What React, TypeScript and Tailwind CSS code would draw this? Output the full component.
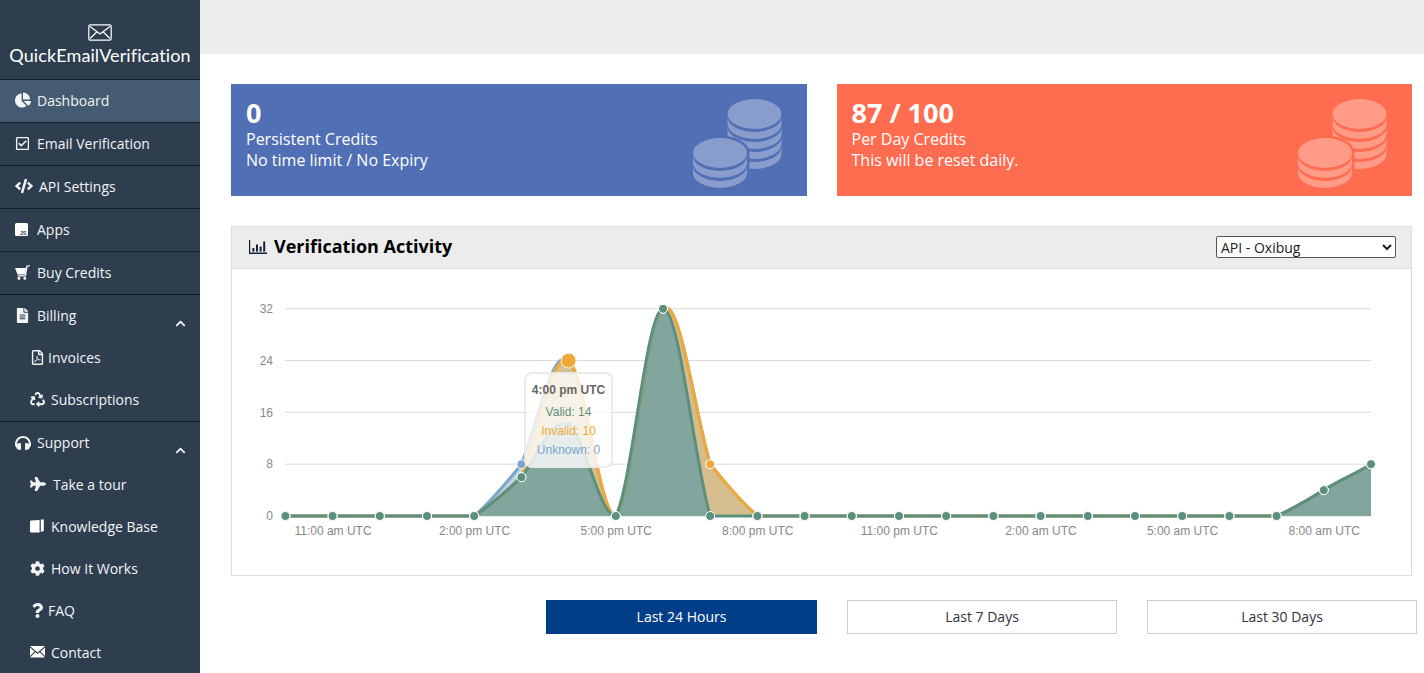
import React from "react";
import { FaChartPie, FaRegCheckSquare, FaCode, FaFileAlt, FaRegFilePdf, FaRecycle, FaHeadphones, FaPlane, FaCog, FaQuestion, FaChevronUp } from "react-icons/fa";

const X0 = 285.4;
const STEP = (1371 - 285.4) / 23;
const Y = (v: number) => 516 - v * 6.475;
const xs = Array.from({ length: 24 }, (_, i) => X0 + STEP * i);
const series = (m: Record<number, number>) => xs.map((_, i) => m[i] ?? 0);
const green = series({ 5: 6, 6: 14, 8: 32, 22: 4, 23: 8 });
const orange = series({ 5: 6, 6: 24, 8: 32, 9: 8, 22: 4, 23: 8 });
const blue = series({ 5: 8, 6: 24, 8: 32, 9: 8, 22: 4, 23: 8 });

function linePath(vals: number[]) {
  const ys = vals.map(Y);
  const grads = ys.map((y, i) => {
    if (i === 0) return (ys[1] - y) / STEP;
    if (i === ys.length - 1) return (y - ys[i - 1]) / STEP;
    return (ys[i + 1] - ys[i - 1]) / (2 * STEP);
  });
  const max = Y(0);
  let d = `M${xs[0]},${ys[0]}`;
  for (let i = 1; i < ys.length; i++) {
    const ix = STEP * 0.35;
    const iy = STEP * 0.55;
    const limit = Math.abs(ys[i] - ys[i - 1]) * 0.4;
    const clamp = (h: number) => Math.max(-limit, Math.min(limit, h));
    d += `C${xs[i - 1] + ix},${Math.min(max, ys[i - 1] + clamp(iy * grads[i - 1]))} ${xs[i] - ix},${Math.min(max, ys[i] - clamp(iy * grads[i]))} ${xs[i]},${ys[i]}`;
  }
  return d;
}

const C = { green: "#5b8f7e", orange: "#f0a838", blue: "#7ba6cb" };

function Series({ vals, line, fill, op }: { vals: number[]; line: string; fill: string; op: number }) {
  const d = linePath(vals);
  return (
    <>
      <path d={`${d}L1371,516L285.4,516Z`} fill={fill} fillOpacity={op} />
      <path d={d} fill="none" stroke={line} strokeWidth={3} />
    </>
  );
}

function Dots({ vals, color, big }: { vals: number[]; color: string; big?: number }) {
  return (
    <>
      {vals.map((v, i) => (
        <circle key={i} cx={xs[i]} cy={Y(v)} r={i === big ? 7.5 : 4.5} fill={color} stroke="#fff" strokeWidth={1} />
      ))}
    </>
  );
}

function Chart() {
  const grid: [number, number][] = [[0, 4], [8, 4], [16, 4.5], [24, 4.5], [32, 4.5]];
  const labels: [number, string][] = [
    [1, "11:00 am UTC"], [4, "2:00 pm UTC"], [7, "5:00 pm UTC"], [10, "8:00 pm UTC"],
    [13, "11:00 pm UTC"], [16, "2:00 am UTC"], [19, "5:00 am UTC"], [22, "8:00 am UTC"],
  ];
  return (
    <svg viewBox="232 269 1179 305" className="block w-[1179px] h-[305px]" fontFamily="'Liberation Sans', Arial, sans-serif" fontSize={12}>
      {grid.map(([g, o]) => (
        <g key={g}>
          <line x1={285} x2={1371} y1={Y(g)} y2={Y(g)} stroke="#d9d9d9" strokeWidth={1} />
          <text x={273} y={Y(g) + o} textAnchor="end" fill="#888">{g}</text>
        </g>
      ))}
      {labels.map(([i, t]) => (
        <text key={t} x={xs[i] + 0.4} y={535} textAnchor="middle" fill="#888">{t}</text>
      ))}
      <Series vals={blue} line={C.blue} fill="#7ba6cb" op={0.5} />
      <Series vals={orange} line={C.orange} fill="#f0a838" op={0.5} />
      <Series vals={green} line={C.green} fill="#669ea2" op={0.75} />
      <Dots vals={blue} color={C.blue} />
      <Dots vals={orange} color={C.orange} big={6} />
      <Dots vals={green} color={C.green} />
    </svg>
  );
}

function Coins({ bg }: { bg: string }) {
  const stack = (cx: number, cy: number, n: number) => (
    <>
      {Array.from({ length: n }, (_, i) => {
        const a = cy + 3 + i * 10;
        return <path key={i} d={`M${cx - 27} ${a}A27 15 0 0 0 ${cx + 27} ${a}V${a + 7}A27 15 0 0 1 ${cx - 27} ${a + 7}Z`} fill="#fff" fillOpacity={0.32} />;
      })}
      <ellipse cx={cx} cy={cy} rx={27} ry={15} fill="#fff" fillOpacity={0.32} />
    </>
  );
  return (
    <svg width={92} height={92} viewBox="690 97 92 92" className="shrink-0">
      {stack(754.5, 113, 4)}
      <path d="M693 152A27 15 0 0 1 747 152V172A27 15 0 0 1 693 172Z" fill={bg} stroke={bg} strokeWidth={5} />
      {stack(720, 152, 2)}
    </svg>
  );
}

const LogoMail = () => (
  <svg width={24} height={17} viewBox="0 0 24 17" fill="none" stroke="#fff" strokeWidth={1.2}>
    <rect x={0.8} y={0.8} width={22.4} height={15.4} rx={1.5} />
    <path d="M2 2.5L12 10L22 2.5M2 14.5L9 7.8M22 14.5L15 7.8" />
  </svg>
);

const JsIcon = () => (
  <svg width={13} height={13} viewBox="0 0 13 13">
    <rect width={13} height={13} rx={1.5} fill="#fff" />
    <text x={11.5} y={11.5} textAnchor="end" fontSize={5.5} fontWeight={700} fill="#2e3e4e" fontFamily="'Liberation Sans', sans-serif">JS</text>
  </svg>
);

const MailIcon = () => (
  <svg width={15} height={12} viewBox="0 0 15 12">
    <path d="M0 0H15L7.5 6.5Z M0 1.6L4.6 5.4L0 10Z M15 1.6L10.4 5.4L15 10Z M0 11.6L5.4 6.2L7.5 8L9.6 6.2L15 11.6Z" fill="#fff" />
  </svg>
);

const CartIcon = () => (
  <svg width={15} height={15} viewBox="0 0 15 15" fill="#fff">
    <path d="M0 3H11L10.2 9.4H2.6Z" />
    <path d="M10.9 2.6L11.4 0.7L14.8 0V1.3L12.5 1.8L11 11.4H2.6V10.3H10Z" />
    <circle cx={4} cy={13.4} r={1.4} />
    <circle cx={9.8} cy={13.4} r={1.4} />
  </svg>
);

const BookIcon = () => (
  <svg width={14} height={14} viewBox="0 0 14 14" fill="#fff">
    <path d="M0 2.6Q0 1.8 1 1.6L9.6 0.9V13.4H1.2Q0 13.4 0 12.4Z" />
    <path d="M10.8 0.4H13.8V12L10.8 13Z" />
  </svg>
);

const BarIcon = () => (
  <svg width={18} height={14} viewBox="0 0 18 14" fill="#14213a">
    <path d="M0 0H1.2V12.6H18V14H0Z" />
    <rect x={3.4} y={8} width={2} height={3.6} />
    <rect x={7} y={4.5} width={2} height={7.1} />
    <rect x={10.6} y={6.5} width={2} height={5.1} />
    <rect x={14.2} y={1.5} width={2} height={10.1} />
  </svg>
);

function Item({ icon, label, gap, active, chevron, last }: { icon: React.ReactNode; label: string; gap: string; active?: boolean; chevron?: boolean; last?: boolean }) {
  return (
    <div className={`h-[43px] flex items-center pl-[15px] pb-[2px] relative ${last ? "" : "border-b border-[#14202c]"} ${active ? "bg-[#445b71]" : ""}`}>
      <span className={`flex items-center justify-start shrink-0 ${gap}`}>{icon}</span>
      <span className="text-[14px]">{label}</span>
      {chevron && <FaChevronUp className="absolute right-[14px] top-[23px]" size={11} />}
    </div>
  );
}

function Sub({ icon, label, gap }: { icon: React.ReactNode; label: string; gap: string }) {
  return (
    <div className="h-[42px] flex items-center pl-[30px] pb-[2px]">
      <span className={`flex items-center shrink-0 ${gap}`}>{icon}</span>
      <span className="text-[14px]">{label}</span>
    </div>
  );
}

function Card({ bg, title, a, b }: { bg: string; title: string; a: string; b: string }) {
  return (
    <div className={`h-[112px] flex justify-between pl-[15px] pr-[25px] pt-[14px] text-white ${bg === "#516fb5" ? "bg-[#516fb5]" : "bg-[#ff6c4f]"}`}>
      <div>
        <div className="text-[27px] font-bold leading-[30px] mb-[1px]">{title}</div>
        <div className="text-[16px] leading-[21px]">{a}</div>
        <div className="text-[16px] leading-[21px]">{b}</div>
      </div>
      <Coins bg={bg} />
    </div>
  );
}

export default function App() {
  return (
    <div className="flex w-[1424px] h-[673px] overflow-hidden bg-white font-['Open_Sans',sans-serif]">
      <aside className="w-[200px] shrink-0 bg-[#2e3e4e] text-[#f2f4f6] overflow-hidden">
        <div className="h-[80px] border-b border-[#14202c] flex flex-col items-center pt-[24px]">
          <LogoMail />
          <div className="font-['Lato',sans-serif] text-[18px] leading-[22px] mt-[3px] tracking-[0.1px] text-white whitespace-nowrap">QuickEmailVerification</div>
        </div>
        <Item active icon={<FaChartPie size={16} />} label="Dashboard" gap="w-[22px]" />
        <Item icon={<FaRegCheckSquare size={15} />} label="Email Verification" gap="w-[22px]" />
        <Item icon={<FaCode size={18} />} label="API Settings" gap="w-[24px]" />
        <Item icon={<JsIcon />} label="Apps" gap="w-[22px]" />
        <Item icon={<CartIcon />} label="Buy Credits" gap="w-[22px]" />
        <div className="border-b border-[#14202c] h-[127px]">
          <Item last chevron icon={<FaFileAlt size={15} />} label="Billing" gap="w-[22px]" />
          <div className="-mt-[1px]">
            <Sub icon={<FaRegFilePdf size={15} />} label="Invoices" gap="w-[18px]" />
            <Sub icon={<FaRecycle size={15} />} label="Subscriptions" gap="w-[21px]" />
          </div>
        </div>
        <Item last chevron icon={<FaHeadphones size={16} />} label="Support" gap="w-[22px]" />
        <div className="-mt-[1px]">
          <Sub icon={<FaPlane size={16} />} label="Take a tour" gap="w-[23px]" />
          <Sub icon={<BookIcon />} label="Knowledge Base" gap="w-[21px]" />
          <Sub icon={<FaCog size={15} />} label="How It Works" gap="w-[21px]" />
          <Sub icon={<FaQuestion size={15} />} label="FAQ" gap="w-[18px]" />
          <Sub icon={<MailIcon />} label="Contact" gap="w-[21px]" />
        </div>
      </aside>
      <main className="flex-1 min-w-0">
        <div className="h-[54px] bg-[#ececec]" />
        <div className="pl-[31px] pr-[12px] pt-[30px]">
          <div className="grid grid-cols-2 gap-[30px]">
            <Card bg="#516fb5" title="0" a="Persistent Credits" b="No time limit / No Expiry" />
            <Card bg="#ff6c4f" title="87 / 100" a="Per Day Credits" b="This will be reset daily." />
          </div>
          <section className="mt-[30px] border border-[#dddddd] h-[350px]">
            <div className="h-[42px] bg-[#ececec] border-b border-[#dddddd] flex items-center justify-between pl-[17px] pr-[15px] pb-[2px]">
              <div className="flex items-center gap-[7px] text-[18px] font-bold text-black">
                <BarIcon />
                <span>Verification Activity</span>
              </div>
              <select defaultValue="oxibug" className="w-[180px] h-[22px] bg-white border border-[#555] rounded-[2px] text-[14px] text-[#222]">
                <option value="oxibug">API - Oxibug</option>
              </select>
            </div>
            <div className="relative">
              <Chart />
              <div className="absolute left-[292px] top-[103px] w-[89px] h-[96px] bg-white/80 border-2 border-[#e6e6e6]/80 rounded-[8px] text-center text-[12px] leading-[19px] font-['Liberation_Sans',sans-serif] pt-[7px]">
                <div className="font-bold text-[#666] mb-[3px]">4:00 pm UTC</div>
                <div className="text-[#5b8f7e]">Valid: 14</div>
                <div className="text-[#f0a838]">Invalid: 10</div>
                <div className="text-[#7ba6cb]">Unknown: 0</div>
              </div>
            </div>
          </section>
          <div className="flex gap-[30px] mt-[24px] ml-[315px] w-[871px] text-[14px] text-[#333]">
            <button className="w-[271px] h-[34px] shrink-0 bg-[#003f88] text-white pb-[2px]">Last 24 Hours</button>
            <button className="w-[270px] h-[34px] shrink-0 border border-[#ccc] pb-[2px]">Last 7 Days</button>
            <button className="w-[270px] h-[34px] shrink-0 border border-[#ccc] pb-[2px]">Last 30 Days</button>
          </div>
        </div>
      </main>
    </div>
  );
}
